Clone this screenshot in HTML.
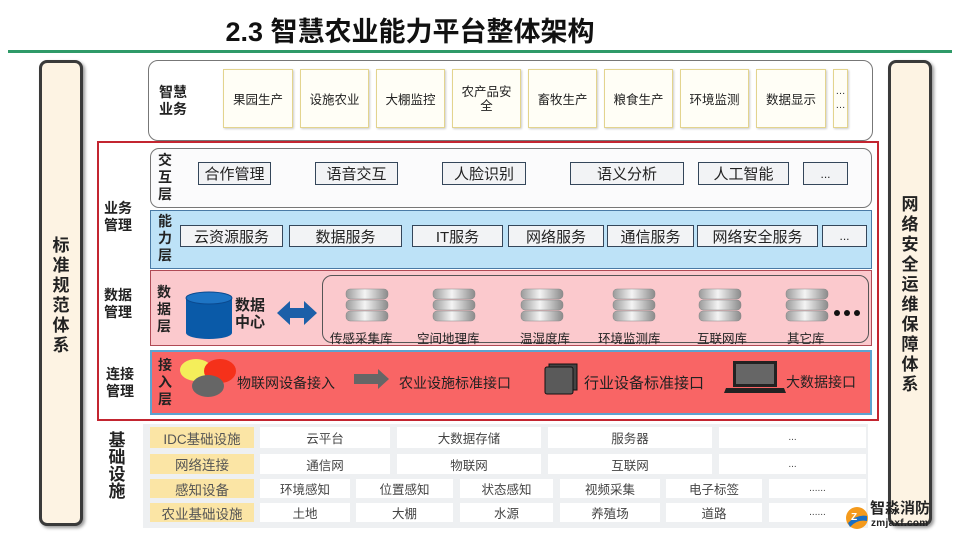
<!DOCTYPE html>
<html><head><meta charset="utf-8"><style>
*{margin:0;padding:0;box-sizing:border-box}
body{width:960px;height:540px;overflow:hidden;background:#fff;position:relative;font-family:"Liberation Sans","Noto Sans CJK SC",sans-serif;color:#222}
.a{position:absolute}
.c{display:flex;align-items:center;justify-content:center;text-align:center}
.title{left:0;top:10px;width:820px;text-align:center;font-size:27px;font-weight:bold;color:#111;letter-spacing:0px}
.side{background:#fdf3e3;border:3px solid #3a3a3a;border-radius:8px;box-shadow:2px 2px 3px #999}
.vt{font-weight:bold;font-size:17px;line-height:20px;width:20px;text-align:center;color:#222}
.biz{background:#fffef6;border:1.5px solid #e3d48e;font-size:12.5px;box-shadow:1px 1px 2px #ccc}
.g{background:#f2f3f5;border:1.3px solid #34465a;font-size:15px;color:#222}
.lbl{font-weight:bold;font-size:14px;line-height:17px}
.tb{background:#fff;font-size:12.5px;color:#444}
.ty{background:#fbe5a5;font-size:13.5px;color:#555}
.dbl{font-size:12.5px;color:#222}
</style></head><body>
<div class="a title">2.3 智慧农业能力平台整体架构</div>
<div class="a" style="left:8px;top:50px;width:944px;height:3px;background:#2f9a68"></div>

<div class="a side" style="left:39px;top:60px;width:44px;height:466px"></div>
<div class="a vt" style="left:51px;top:236px">标<br>准<br>规<br>范<br>体<br>系</div>
<div class="a side" style="left:888px;top:60px;width:44px;height:466px"></div>
<div class="a vt" style="left:900px;top:195px">网<br>络<br>安<br>全<br>运<br>维<br>保<br>障<br>体<br>系</div>

<div class="a" style="left:148px;top:60px;width:725px;height:81px;border:1.5px solid #777;border-radius:10px;background:#fff"></div>
<div class="a lbl" style="left:159px;top:84px">智慧<br>业务</div>
<div class="a c biz" style="left:223px;top:69px;width:70px;height:59px">果园生产</div>
<div class="a c biz" style="left:300px;top:69px;width:69px;height:59px">设施农业</div>
<div class="a c biz" style="left:376px;top:69px;width:69px;height:59px">大棚监控</div>
<div class="a c biz" style="left:452px;top:69px;width:69px;height:59px;line-height:14px">农产品安<br>全</div>
<div class="a c biz" style="left:528px;top:69px;width:69px;height:59px">畜牧生产</div>
<div class="a c biz" style="left:604px;top:69px;width:69px;height:59px">粮食生产</div>
<div class="a c biz" style="left:680px;top:69px;width:69px;height:59px">环境监测</div>
<div class="a c biz" style="left:756px;top:69px;width:70px;height:59px">数据显示</div>
<div class="a c biz" style="left:833px;top:69px;width:15px;height:59px;font-size:10px;line-height:14px">…<br>…</div>

<div class="a" style="left:97px;top:141px;width:782px;height:280px;border:2px solid #c32530;background:#fff"></div>
<div class="a lbl" style="left:104px;top:200px">业务<br>管理</div>
<div class="a lbl" style="left:104px;top:287px">数据<br>管理</div>
<div class="a lbl" style="left:106px;top:366px">连接<br>管理</div>

<div class="a" style="left:150px;top:148px;width:722px;height:60px;border:1.3px solid #777;border-radius:9px;background:#fbfbfc"></div>
<div class="a lbl" style="left:158px;top:152px">交<br>互<br>层</div>
<div class="a c g" style="left:198px;top:162px;width:73px;height:23px">合作管理</div>
<div class="a c g" style="left:315px;top:162px;width:83px;height:23px">语音交互</div>
<div class="a c g" style="left:442px;top:162px;width:84px;height:23px">人脸识别</div>
<div class="a c g" style="left:570px;top:162px;width:114px;height:23px">语义分析</div>
<div class="a c g" style="left:698px;top:162px;width:91px;height:23px">人工智能</div>
<div class="a c g" style="left:803px;top:162px;width:45px;height:23px;font-size:12px">...</div>

<div class="a" style="left:150px;top:210px;width:722px;height:59px;border:1.3px solid #4a7aa5;background:#bde2f7"></div>
<div class="a lbl" style="left:158px;top:213px">能<br>力<br>层</div>
<div class="a c g" style="left:180px;top:225px;width:103px;height:22px">云资源服务</div>
<div class="a c g" style="left:289px;top:225px;width:113px;height:22px">数据服务</div>
<div class="a c g" style="left:412px;top:225px;width:91px;height:22px">IT服务</div>
<div class="a c g" style="left:508px;top:225px;width:96px;height:22px">网络服务</div>
<div class="a c g" style="left:607px;top:225px;width:87px;height:22px">通信服务</div>
<div class="a c g" style="left:697px;top:225px;width:121px;height:22px">网络安全服务</div>
<div class="a c g" style="left:822px;top:225px;width:45px;height:22px;font-size:12px">...</div>

<div class="a" style="left:150px;top:270px;width:722px;height:76px;border:1.3px solid #b04a55;background:#fbc9cd"></div>
<div class="a lbl" style="left:157px;top:284px">数<br>据<br>层</div>
<svg class="a" style="left:185px;top:291px" width="48" height="48"><rect x="1" y="6" width="46" height="36" fill="#0a5aa8"/><ellipse cx="24" cy="42" rx="23" ry="6" fill="#0a5aa8"/><ellipse cx="24" cy="7" rx="23" ry="6" fill="#1e74c4" stroke="#0a4a90"/></svg>
<div class="a lbl" style="left:235px;top:297px;font-size:15px">数据<br>中心</div>
<svg class="a" style="left:276px;top:300px" width="42" height="26"><polygon points="1,13 14,1 14,8 28,8 28,1 41,13 28,25 28,18 14,18 14,25" fill="#1c5fa8"/></svg>
<div class="a" style="left:322px;top:275px;width:547px;height:68px;border:1.2px solid #555;border-radius:10px"></div>
<svg width="0" height="0" style="position:absolute"><defs><linearGradient id="sg" x1="0" x2="1"><stop offset="0" stop-color="#9a9a9a"/><stop offset=".45" stop-color="#f4f4f4"/><stop offset="1" stop-color="#8a8a8a"/></linearGradient></defs></svg>
<svg class="a" style="left:345px;top:286px" width="46" height="38"><g fill="url(#sg)" stroke="#888" stroke-width=".5"><rect x="1" y="25" width="42" height="10" rx="4"/><rect x="1" y="14" width="42" height="10" rx="4"/><rect x="1" y="3" width="42" height="10" rx="4"/></g></svg>
<svg class="a" style="left:432px;top:286px" width="46" height="38"><g fill="url(#sg)" stroke="#888" stroke-width=".5"><rect x="1" y="25" width="42" height="10" rx="4"/><rect x="1" y="14" width="42" height="10" rx="4"/><rect x="1" y="3" width="42" height="10" rx="4"/></g></svg>
<svg class="a" style="left:520px;top:286px" width="46" height="38"><g fill="url(#sg)" stroke="#888" stroke-width=".5"><rect x="1" y="25" width="42" height="10" rx="4"/><rect x="1" y="14" width="42" height="10" rx="4"/><rect x="1" y="3" width="42" height="10" rx="4"/></g></svg>
<svg class="a" style="left:612px;top:286px" width="46" height="38"><g fill="url(#sg)" stroke="#888" stroke-width=".5"><rect x="1" y="25" width="42" height="10" rx="4"/><rect x="1" y="14" width="42" height="10" rx="4"/><rect x="1" y="3" width="42" height="10" rx="4"/></g></svg>
<svg class="a" style="left:698px;top:286px" width="46" height="38"><g fill="url(#sg)" stroke="#888" stroke-width=".5"><rect x="1" y="25" width="42" height="10" rx="4"/><rect x="1" y="14" width="42" height="10" rx="4"/><rect x="1" y="3" width="42" height="10" rx="4"/></g></svg>
<svg class="a" style="left:785px;top:286px" width="46" height="38"><g fill="url(#sg)" stroke="#888" stroke-width=".5"><rect x="1" y="25" width="42" height="10" rx="4"/><rect x="1" y="14" width="42" height="10" rx="4"/><rect x="1" y="3" width="42" height="10" rx="4"/></g></svg>
<svg class="a" style="left:833px;top:308px" width="30" height="10"><circle cx="4" cy="5" r="3" fill="#111"/><circle cx="14" cy="5" r="3" fill="#111"/><circle cx="24" cy="5" r="3" fill="#111"/></svg>
<div class="a dbl" style="left:330px;top:328px">传感采集库</div>
<div class="a dbl" style="left:417px;top:328px">空间地理库</div>
<div class="a dbl" style="left:520px;top:328px">温湿度库</div>
<div class="a dbl" style="left:598px;top:328px">环境监测库</div>
<div class="a dbl" style="left:697px;top:328px">互联网库</div>
<div class="a dbl" style="left:787px;top:328px">其它库</div>

<div class="a" style="left:150px;top:350px;width:722px;height:65px;border:2.5px solid #5ea3d0;background:#f96565"></div>
<div class="a lbl" style="left:158px;top:357px">接<br>入<br>层</div>
<svg class="a" style="left:178px;top:358px" width="62" height="40"><ellipse cx="18" cy="12" rx="16" ry="11" fill="#f4ee5a"/><ellipse cx="42" cy="13" rx="16" ry="12" fill="#f5311a"/><ellipse cx="30" cy="28" rx="16" ry="11" fill="#666"/></svg>
<div class="a" style="left:237px;top:373px;font-size:14px;color:#222">物联网设备接入</div>
<svg class="a" style="left:354px;top:369px" width="36" height="20"><polygon points="0,5 24,5 24,0 35,10 24,20 24,15 0,15" fill="#666"/></svg>
<div class="a" style="left:399px;top:373px;font-size:14px;color:#222">农业设施标准接口</div>
<svg class="a" style="left:544px;top:363px" width="36" height="32"><rect x="5" y="1" width="28" height="26" fill="#444" stroke="#111"/><rect x="1" y="4" width="28" height="27" rx="2" fill="#5a5a5a" stroke="#111"/></svg>
<div class="a" style="left:584px;top:372px;font-size:15px;color:#222">行业设备标准接口</div>
<svg class="a" style="left:724px;top:360px" width="62" height="34"><rect x="9" y="1" width="44" height="26" fill="#222"/><rect x="12" y="4" width="38" height="20" fill="#666"/><polygon points="2,28 60,28 62,33 0,33" fill="#222"/></svg>
<div class="a" style="left:786px;top:372px;font-size:14px;color:#222">大数据接口</div>

<div class="a" style="left:143px;top:424px;width:725px;height:104px;background:#eef0f2"></div>
<div class="a vt" style="left:107px;top:432px;font-size:17px;line-height:17px">基<br>础<br>设<br>施</div>
<div class="a c ty" style="left:150px;top:427px;width:104px;height:21px">IDC基础设施</div>
<div class="a c ty" style="left:150px;top:454px;width:104px;height:20px">网络连接</div>
<div class="a c ty" style="left:150px;top:479px;width:104px;height:19px">感知设备</div>
<div class="a c ty" style="left:150px;top:503px;width:104px;height:19px">农业基础设施</div>

<div class="a c tb" style="left:260px;top:427px;width:130px;height:21px">云平台</div>
<div class="a c tb" style="left:397px;top:427px;width:144px;height:21px">大数据存储</div>
<div class="a c tb" style="left:548px;top:427px;width:164px;height:21px">服务器</div>
<div class="a c tb" style="left:719px;top:427px;width:147px;height:21px;font-size:10px">...</div>

<div class="a c tb" style="left:260px;top:454px;width:130px;height:20px">通信网</div>
<div class="a c tb" style="left:397px;top:454px;width:144px;height:20px">物联网</div>
<div class="a c tb" style="left:548px;top:454px;width:164px;height:20px">互联网</div>
<div class="a c tb" style="left:719px;top:454px;width:147px;height:20px;font-size:10px">...</div>

<div class="a c tb" style="left:260px;top:479px;width:90px;height:19px">环境感知</div>
<div class="a c tb" style="left:356px;top:479px;width:97px;height:19px">位置感知</div>
<div class="a c tb" style="left:460px;top:479px;width:93px;height:19px">状态感知</div>
<div class="a c tb" style="left:560px;top:479px;width:100px;height:19px">视频采集</div>
<div class="a c tb" style="left:666px;top:479px;width:96px;height:19px">电子标签</div>
<div class="a c tb" style="left:769px;top:479px;width:97px;height:19px;font-size:10px">......</div>

<div class="a c tb" style="left:260px;top:503px;width:90px;height:19px">土地</div>
<div class="a c tb" style="left:356px;top:503px;width:97px;height:19px">大棚</div>
<div class="a c tb" style="left:460px;top:503px;width:93px;height:19px">水源</div>
<div class="a c tb" style="left:560px;top:503px;width:100px;height:19px">养殖场</div>
<div class="a c tb" style="left:666px;top:503px;width:96px;height:19px">道路</div>
<div class="a c tb" style="left:769px;top:503px;width:97px;height:19px;font-size:10px">......</div>

<svg class="a" style="left:845px;top:506px" width="24" height="24"><circle cx="12" cy="12" r="11" fill="#f49a1c"/><path d="M3 17 Q12 8 22 10 L22 15 Q12 13 5 21Z" fill="#1a6fc4"/><text x="6" y="14" font-size="10" font-weight="bold" fill="#fff" font-family="Liberation Sans">Z</text></svg>
<div class="a" style="left:870px;top:500px;font-size:15px;font-weight:bold;color:#222;line-height:17px">智淼消防</div>
<div class="a" style="left:871px;top:518px;font-size:10px;font-weight:bold;color:#222;letter-spacing:.3px">zmjaxf.com</div>
</body></html>
